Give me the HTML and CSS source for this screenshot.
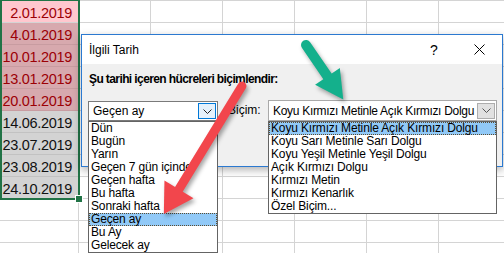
FILE: index.html
```html
<!DOCTYPE html>
<html lang="tr">
<head>
<meta charset="utf-8">
<title>İlgili Tarih</title>
<link rel="stylesheet" href="styles.css">
</head>
<body>
<div class="sheet">
  <div class="col-a">
    <div class="cell active">2.01.2019</div>
    <div class="cell sel-red">4.01.2019</div>
    <div class="cell sel-red">10.01.2019</div>
    <div class="cell sel-red">13.01.2019</div>
    <div class="cell sel-red">20.01.2019</div>
    <div class="cell sel">14.06.2019</div>
    <div class="cell sel">23.07.2019</div>
    <div class="cell sel">23.08.2019</div>
    <div class="cell sel">24.10.2019</div>
    <div class="cell"></div>
    <div class="cell"></div>
    <div class="cell"></div>
    <div class="selection"><span class="handle"></span></div>
  </div>
  <div class="grid"></div>
</div>

<div class="dialog">
  <div class="titlebar">
    <span class="title">İlgili Tarih</span>
    <span class="tb-btn help">?</span>
    <span class="tb-btn close"><svg width="11" height="11" viewBox="0 0 11 11"><path d="M0.5 0.5 L10.5 10.5 M10.5 0.5 L0.5 10.5" stroke="#000" stroke-width="1" fill="none"/></svg></span>
  </div>
  <div class="dlg-body">
    <div class="prompt">Şu tarihi içeren hücreleri biçimlendir:</div>
    <div class="row">
      <div class="combo combo-date">
        <span class="combo-text">Geçen ay</span>
        <span class="drop-btn focus"><svg width="9" height="5" viewBox="0 0 9 5"><path d="M0.5 0.5 L4.5 4.5 L8.5 0.5" fill="none" stroke="#222"/></svg></span>
        <ul class="list list-date">
          <li>Dün</li>
          <li>Bugün</li>
          <li>Yarın</li>
          <li>Geçen 7 gün içinde</li>
          <li>Geçen hafta</li>
          <li>Bu hafta</li>
          <li>Sonraki hafta</li>
          <li class="current">Geçen ay</li>
          <li>Bu Ay</li>
          <li>Gelecek ay</li>
        </ul>
      </div>
      <label class="fmt-label">Biçim:</label>
      <div class="combo combo-fmt">
        <span class="combo-text tight">Koyu Kırmızı Metinle Açık Kırmızı Dolgu</span>
        <span class="drop-btn"><svg width="9" height="5" viewBox="0 0 9 5"><path d="M0.5 0.5 L4.5 4.5 L8.5 0.5" fill="none" stroke="#555"/></svg></span>
        <ul class="list list-fmt">
          <li class="current">Koyu Kırmızı Metinle Açık Kırmızı Dolgu</li>
          <li>Koyu Sarı Metinle Sarı Dolgu</li>
          <li>Koyu Yeşil Metinle Yeşil Dolgu</li>
          <li>Açık Kırmızı Dolgu</li>
          <li>Kırmızı Metin</li>
          <li>Kırmızı Kenarlık</li>
          <li>Özel Biçim...</li>
        </ul>
      </div>
    </div>
  </div>
</div>

<svg class="arrows" width="504" height="253" viewBox="0 0 504 253">
  <g transform="translate(306 45) rotate(55.6)" fill="#14b08c">
    <line x1="0" y1="0" x2="42" y2="0" stroke="#14b08c" stroke-width="10" stroke-linecap="round"/>
    <polygon points="38,-15 66,0 38,15"/>
  </g>
  <g transform="translate(242 86) rotate(121.4)" fill="#f2464c">
    <line x1="0" y1="0" x2="125" y2="0" stroke="#f2464c" stroke-width="9" stroke-linecap="round"/>
    <polygon points="121,-17 150,0 121,17"/>
  </g>
</svg>
</body>
</html>
```

FILE: styles.css
```css
* { box-sizing: border-box; }
html, body { margin: 0; padding: 0; }
body {
  position: relative;
  width: 504px;
  height: 253px;
  overflow: hidden;
  background: #fff;
  font-family: "Liberation Sans", Arial, sans-serif;
  font-size: 12px;
  color: #000;
}

/* spreadsheet */
.sheet {
  display: flex;
  width: 504px;
  height: 253px;
  border-top: 1px solid #d4d4d4;
}
.col-a {
  position: relative;
  width: 78px;
  flex: none;
  display: flex;
  flex-direction: column;
}
.cell {
  height: 22px;
  flex: none;
  border-bottom: 1px solid #d4d4d4;
  padding: 3px 6px 0 0;
  line-height: 18px;
  font-size: 14.5px;
  letter-spacing: -0.3px;
  text-align: right;
}
.cell.active { background: #ffc7ce; color: #9c0006; }
.cell.sel-red { background: #d7a9ae; color: #9c0006; border-bottom-color: #c89ca1; }
.cell.sel { background: #d3d3d3; color: #111; border-bottom-color: #c2c2c2; }
.grid {
  flex: 1;
  background-image:
    linear-gradient(to right, #d4d4d4 1px, transparent 1px),
    linear-gradient(to top, #d4d4d4 1px, transparent 1px);
  background-size: 72px 22px;
}
.selection {
  position: absolute;
  left: 0;
  top: -2px;
  width: 80px;
  height: 201px;
  border: 2px solid #217346;
}
.handle {
  position: absolute;
  right: -4px;
  bottom: -4px;
  width: 6px;
  height: 6px;
  background: #217346;
  outline: 1px solid #fff;
}

/* dialog */
.dialog {
  position: absolute;
  left: 81px;
  top: 34px;
  width: 422px;
  height: 133px;
  border: 1px solid #2b79d0;
  background: #f0f0f0;
  box-shadow: 0 3px 8px rgba(0, 0, 0, 0.3);
  display: flex;
  flex-direction: column;
  z-index: 2;
}
.titlebar {
  flex: none;
  height: 29px;
  background: #fff;
  display: flex;
  align-items: center;
  padding-left: 7px;
}
.title { flex: 1; font-size: 12px; }
.tb-btn {
  height: 29px;
  display: flex;
  align-items: center;
  justify-content: center;
}
.tb-btn.help { width: 44px; font-size: 14px; }
.tb-btn.close { width: 46px; }
.dlg-body { padding: 8px 0 0 6px; }
.prompt {
  font-weight: bold;
  letter-spacing: -0.6px;
  line-height: 14px;
  margin-left: 1px;
}
.row {
  display: flex;
  align-items: flex-start;
  margin-top: 14px;
}
.combo {
  position: relative;
  display: flex;
  align-items: center;
  background: #fff;
  border: 1px solid #7a7a7a;
}
.combo-date { width: 130px; height: 20px; margin-top: 1px; }
.combo-fmt { width: 229px; height: 21px; border-color: #a9a9a9; }
.combo-text {
  flex: 1;
  min-width: 0;
  overflow: hidden;
  padding-left: 4px;
  white-space: nowrap;
  line-height: 14px;
}
.combo-text.tight { letter-spacing: -0.3px; }
.drop-btn {
  flex: none;
  width: 18px;
  height: 16px;
  margin-right: 1px;
  display: flex;
  align-items: center;
  justify-content: center;
  border: 1px solid #adadad;
  background: #e1e1e1;
}
.drop-btn.focus { border-color: #0078d7; background: #e5f1fb; }
.fmt-label {
  width: 50px;
  padding-left: 10px;
  line-height: 21px;
}
.list {
  position: absolute;
  left: -1px;
  top: calc(100% + 1px);
  margin: 0;
  padding: 0;
  list-style: none;
  background: #fff;
  border: 1px solid #646464;
  z-index: 3;
  overflow: hidden;
}
.list-date { width: 130px; }
.list-fmt { width: 229px; }
.list li {
  height: 13px;
  line-height: 13px;
  padding-left: 2px;
  white-space: nowrap;
  letter-spacing: -0.15px;
}
.list li.current {
  background: #91c9f7;
  border: 1px dotted #5c4c30;
  padding-left: 1px;
  line-height: 11px;
}

/* annotation arrows */
.arrows {
  position: absolute;
  left: 0;
  top: 0;
  z-index: 5;
  pointer-events: none;
  filter: drop-shadow(2px 3px 2px rgba(0, 0, 0, 0.35));
}
```
